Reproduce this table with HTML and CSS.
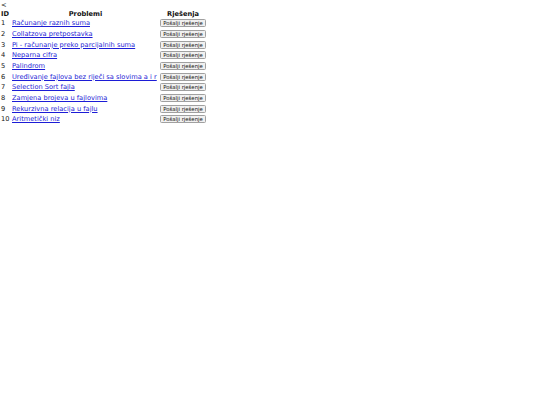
FILE: index.html
```html
<!DOCTYPE html>
<html>
<head>
<meta charset="utf-8">
<link rel="stylesheet" href="styles.css">
</head>
<body>
<div class="back">&lt;</div>
<table class="tasks">
<thead>
<tr><th class="c-id">ID</th><th class="c-prob">Problemi</th><th class="c-sol">Rješenja</th></tr>
</thead>
<tbody>
<tr><td class="c-id">1</td><td class="c-prob"><a href="#">Računanje raznih suma</a></td><td class="c-sol"><button>Pošalji rješenje</button></td></tr>
<tr><td class="c-id">2</td><td class="c-prob"><a href="#">Collatzova pretpostavka</a></td><td class="c-sol"><button>Pošalji rješenje</button></td></tr>
<tr><td class="c-id">3</td><td class="c-prob"><a href="#">Pi - računanje preko parcijalnih suma</a></td><td class="c-sol"><button>Pošalji rješenje</button></td></tr>
<tr><td class="c-id">4</td><td class="c-prob"><a href="#">Neparna cifra</a></td><td class="c-sol"><button>Pošalji rješenje</button></td></tr>
<tr><td class="c-id">5</td><td class="c-prob"><a href="#">Palindrom</a></td><td class="c-sol"><button>Pošalji rješenje</button></td></tr>
<tr><td class="c-id">6</td><td class="c-prob"><a href="#">Uređivanje fajlova bez riječi sa slovima a i r</a></td><td class="c-sol"><button>Pošalji rješenje</button></td></tr>
<tr><td class="c-id">7</td><td class="c-prob"><a href="#">Selection Sort fajla</a></td><td class="c-sol"><button>Pošalji rješenje</button></td></tr>
<tr><td class="c-id">8</td><td class="c-prob"><a href="#">Zamjena brojeva u fajlovima</a></td><td class="c-sol"><button>Pošalji rješenje</button></td></tr>
<tr><td class="c-id">9</td><td class="c-prob"><a href="#">Rekurzivna relacija u fajlu</a></td><td class="c-sol"><button>Pošalji rješenje</button></td></tr>
<tr><td class="c-id">10</td><td class="c-prob"><a href="#">Aritmetički niz</a></td><td class="c-sol"><button>Pošalji rješenje</button></td></tr>
</tbody>
</table>
</body>
</html>
```

FILE: styles.css
```css
body {
  margin: 0;
  font-family: "DejaVu Sans", sans-serif;
  font-size: 6.67px;
  color: #111;
  background: #fff;
}
.back {
  height: 8px;
  line-height: 8px;
  padding-top: 1px;
  padding-left: 1px;
}
.tasks {
  border-spacing: 0;
  border-collapse: separate;
  table-layout: fixed;
  width: 207px;
}
.tasks th {
  height: 9px;
  padding: 0;
  line-height: 8px;
  font-weight: bold;
  white-space: nowrap;
}
.tasks td {
  height: 10.67px;
  padding: 0;
  line-height: 8px;
  white-space: nowrap;
}
.c-id {
  width: 11px;
  text-align: left;
  padding-left: 1px !important;
}
.c-prob {
  width: 147px;
  overflow: hidden;
}
.c-sol {
  text-align: center;
}
a { color: #1c1cd6; }
button {
  font-family: "DejaVu Sans", sans-serif;
  font-size: 5.33px;
  padding: 0 2px;
  height: 8px;
  line-height: 6px;
  border: 1px solid #a0a0a0;
  border-radius: 1.5px;
  background: #f0f0f0;
  color: #111;
  vertical-align: middle;
}
```
